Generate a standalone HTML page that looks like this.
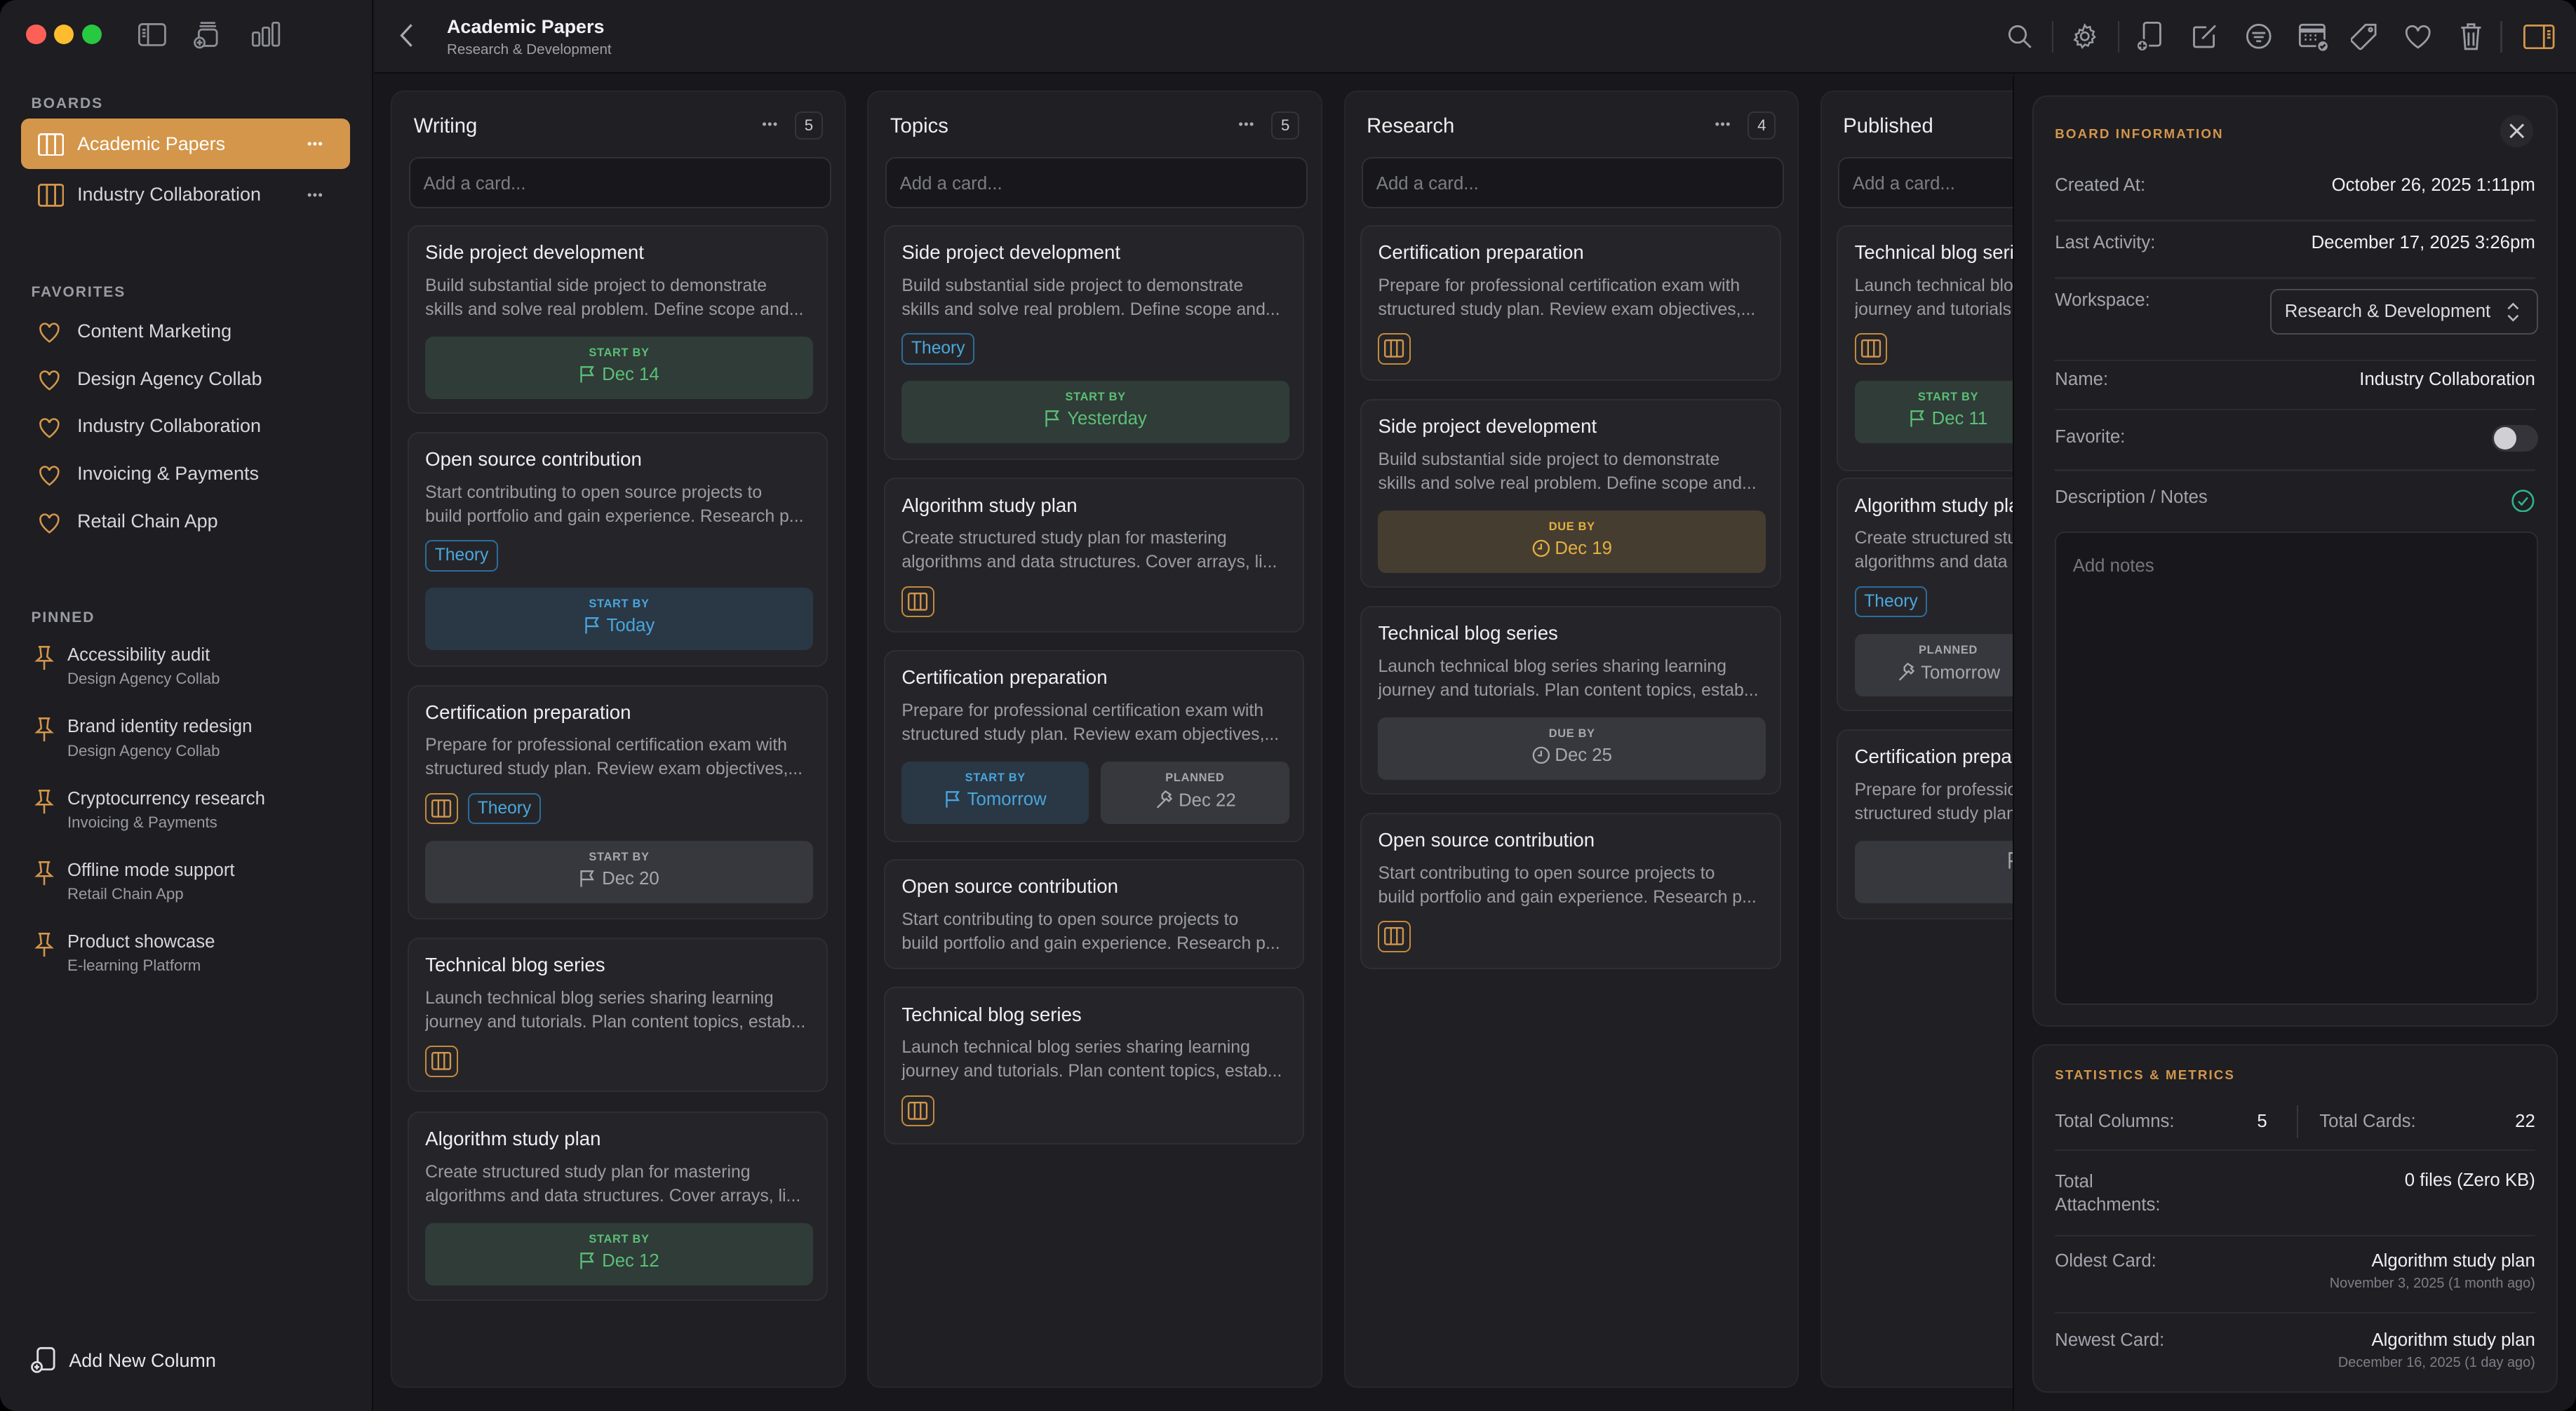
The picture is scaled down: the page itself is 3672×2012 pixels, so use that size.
<!DOCTYPE html>
<html><head><meta charset="utf-8"><style>
html{zoom:2.34184}
*{box-sizing:border-box;margin:0;padding:0}
body{width:1568px;height:859px;background:#000;font-family:"Liberation Sans",sans-serif;color:#e8e8ec;position:relative;overflow:hidden}
.win{position:absolute;left:0;top:0;width:1568px;height:859px;background:#18181c;border-radius:10px;overflow:hidden}
.a{position:absolute;white-space:nowrap}
.side{position:absolute;left:0;top:0;width:227px;height:859px;background:#1d1d22;border-right:1px solid #0e0e10}
.hdr{position:absolute;left:228px;top:0;right:0;height:45px;background:#1d1d22;border-bottom:1px solid #0c0c0e}
.sec{font-size:9px;font-weight:bold;letter-spacing:.8px;color:#9a9ba3}
.si{font-size:11.5px;color:#d6d6dc}
.col{position:absolute;top:55px;width:277px;height:790px;background:#1f1f24;border:1px solid #26262b;border-radius:8px;overflow:hidden}
.ch{position:absolute;left:13px;top:14px;font-size:12.5px;color:#eee}
.dots{position:absolute;top:15px;font-size:8px;color:#aaa;letter-spacing:0.5px}
.cnt{position:absolute;top:12px;width:17px;height:17px;border:1px solid #34343a;border-radius:4px;font-size:9.5px;text-align:center;line-height:15px;color:#ccc}
.add{position:absolute;left:10px;top:40px;width:257px;height:31px;background:#18181c;border:1px solid #303036;border-radius:6px;font-size:11px;color:#7c7d85;padding:9px 0 0 8px}
.card{position:absolute;left:10px;width:256px;background:#252529;border:1px solid #2e2e33;border-radius:7px;overflow:hidden}
.ct{position:absolute;left:10px;top:9px;font-size:11.8px;color:#f0f0f3;white-space:nowrap}
.cd{position:absolute;left:10px;top:29px;width:238px;font-size:10.6px;line-height:14.5px;color:#9b9ca4}
.cd div{white-space:nowrap;overflow:hidden;text-overflow:ellipsis}
.tag{position:absolute;top:65px;height:19px;border:1px solid #2d6c9b;border-radius:4px;font-size:10.5px;color:#4aa8e0;padding:0 5px;line-height:17px}
.ic{position:absolute;top:65px;width:20px;height:19px;border:1px solid #c48a3c;border-radius:4px}
.b{position:absolute;height:38px;border-radius:5px;text-align:center}
.b .l{font-size:7px;font-weight:bold;letter-spacing:.3px;margin-top:6px}
.b .v{font-size:11px;margin-top:3px}
.g{background:#2f3c37;color:#5cbf78}.bl{background:#2a3744;color:#48a6de}.gr{background:#37383d;color:#a7a8ae}.o{background:#463d31;color:#e3b040}
.b svg{vertical-align:-2px;margin-right:3px}
.panel{position:absolute;left:1237px;width:320px;background:#1e1e23;border:1px solid #29292e;border-radius:9px}
.pl{font-size:11px;color:#a4a5ad}
.pv{font-size:11px;color:#f0f0f3;text-align:right}
.hr{position:absolute;left:13px;right:13px;height:1px;background:#2b2b30}
.ttl{font-size:8px;font-weight:bold;letter-spacing:.9px;color:#d4964a}
</style></head><body><div class="win">

<div class="side">
 <div class="a" style="left:16px;top:15px;width:12px;height:12px;border-radius:6px;background:#fe5f57"></div>
 <div class="a" style="left:33px;top:15px;width:12px;height:12px;border-radius:6px;background:#febc2e"></div>
 <div class="a" style="left:50px;top:15px;width:12px;height:12px;border-radius:6px;background:#28c840"></div>
 <svg class="a" style="left:84px;top:14px" width="17" height="14" viewBox="0 0 17 14" fill="none" stroke="#8d8e96" stroke-width="1.2"><rect x=".6" y=".6" width="15.8" height="12.8" rx="2"/><path d="M6 .6v12.8M2.5 4h2M2.5 6h2M2.5 8h2"/></svg>
 <svg class="a" style="left:117px;top:12px" width="18" height="18" viewBox="0 0 18 18" fill="none" stroke="#8d8e96" stroke-width="1.2"><path d="M5 2h9M4.5 4h10"/><rect x="4" y="6" width="11" height="10" rx="2"/><circle cx="4.5" cy="14" r="3" fill="#1d1d22"/><path d="M4.5 12.3v3.4M2.8 14h3.4"/></svg>
 <svg class="a" style="left:153px;top:13px" width="18" height="16" viewBox="0 0 18 16" fill="none" stroke="#8d8e96" stroke-width="1.2"><rect x="1" y="7" width="4" height="8" rx="1"/><rect x="7" y="4" width="4" height="11" rx="1"/><rect x="13" y="1" width="4" height="14" rx="1"/></svg>

 <div class="a sec" style="left:19px;top:58px">BOARDS</div>
 <div class="a" style="left:13px;top:72px;width:200px;height:31px;border-radius:5px;background:#d4964a"></div>
 <svg class="a" style="left:23px;top:81px" width="16" height="14" viewBox="0 0 16 14" fill="none" stroke="#fff" stroke-width="1.2"><rect x=".6" y=".6" width="14.8" height="12.8" rx="1.5"/><path d="M5.5 .6v12.8M10.5 .6v12.8"/></svg>
 <div class="a si" style="left:47px;top:81px;color:#fff">Academic Papers</div>
 <div class="a" style="left:187px;top:83px;font-size:8px;color:#fff;letter-spacing:.5px">•••</div>
 <svg class="a" style="left:23px;top:112px" width="16" height="14" viewBox="0 0 16 14" fill="none" stroke="#d4964a" stroke-width="1.2"><rect x=".6" y=".6" width="14.8" height="12.8" rx="1.5"/><path d="M5.5 .6v12.8M10.5 .6v12.8"/></svg>
 <div class="a si" style="left:47px;top:112px">Industry Collaboration</div>
 <div class="a" style="left:187px;top:114px;font-size:8px;color:#aaa;letter-spacing:.5px">•••</div>

 <div class="a sec" style="left:19px;top:173px">FAVORITES</div>
 <div id="fav"></div>
 <div class="a sec" style="left:19px;top:371px">PINNED</div>

 <svg class="a" style="left:18px;top:820px" width="17" height="17" viewBox="0 0 17 17" fill="none" stroke="#e0e0e4" stroke-width="1.2"><rect x="5" y="1" width="10" height="13" rx="2"/><circle cx="4.5" cy="12.5" r="3" fill="#1d1d22"/><path d="M4.5 11v3M3 12.5h3"/></svg>
 <div class="a" style="left:42px;top:822px;font-size:11.5px;color:#e8e8ec">Add New Column</div>
</div>

<div class="hdr">
 <svg class="a" style="left:15px;top:14px" width="9" height="15" viewBox="0 0 9 15" fill="none" stroke="#aaa" stroke-width="1.4"><path d="M7.5 1L1.5 7.5l6 6.5"/></svg>
 <div class="a" style="left:44px;top:10px;font-size:11.5px;font-weight:bold;color:#f2f2f4">Academic Papers</div>
 <div class="a" style="left:44px;top:25px;font-size:8.8px;color:#a0a1a8">Research &amp; Development</div>
 <svg class="a" style="left:994px;top:15px" width="15" height="15" viewBox="0 0 15 15" fill="none" stroke="#9a9ba3" stroke-width="1.2"><circle cx="6" cy="6" r="5"/><path d="M9.7 9.7L14 14"/></svg>
 <div class="a" style="left:1021px;top:13px;width:1px;height:19px;background:#36363b"></div>
 <svg class="a" style="left:1033px;top:14px" width="16" height="16" viewBox="0 0 16 16" fill="none" stroke="#9a9ba3" stroke-width="1.1"><circle cx="8" cy="8" r="2.4"/><path d="M8 1.2l1.2 1.6 2-.5.4 2 1.9.8-.7 1.9 1.3 1.5-1.6 1.2.3 2-2 .2-.8 1.9-1.9-.8L6.5 14.8l-.9-1.8-2 .1.1-2L1.9 10.2l1.3-1.5-.7-1.9 1.9-.8.4-2 2 .5z"/></svg>
 <div class="a" style="left:1061px;top:13px;width:1px;height:19px;background:#36363b"></div>
 <svg class="a" style="left:1071px;top:13px" width="18" height="19" viewBox="0 0 18 19" fill="none" stroke="#9a9ba3" stroke-width="1.2"><rect x="6" y="1" width="10" height="14" rx="1.5"/><circle cx="5" cy="15" r="3.5" fill="#9a9ba3" stroke="#1d1d22"/><path d="M5 13v4M3 15h4" stroke="#1d1d22"/></svg>
 <svg class="a" style="left:1106px;top:14px" width="16" height="16" viewBox="0 0 16 16" fill="none" stroke="#9a9ba3" stroke-width="1.2"><path d="M9 2.5H2.5a1 1 0 00-1 1v10a1 1 0 001 1h10a1 1 0 001-1V7"/><path d="M6.5 9.5l8-8"/></svg>
 <svg class="a" style="left:1139px;top:14px" width="16" height="16" viewBox="0 0 16 16" fill="none" stroke="#9a9ba3" stroke-width="1.2"><circle cx="8" cy="8" r="7"/><path d="M4 6h8M5 8.5h6M6.5 11h3"/></svg>
 <svg class="a" style="left:1171px;top:14px" width="19" height="18" viewBox="0 0 19 18" fill="none" stroke="#9a9ba3" stroke-width="1.2"><rect x="1" y="1" width="15" height="13" rx="1.5"/><path d="M1 4.5h15" stroke-width="2.5"/><path d="M4 7.5h1M7 7.5h1M10 7.5h1M4 10h1M7 10h1M10 10h1" /><circle cx="15" cy="14" r="3.5" fill="#9a9ba3" stroke="#1d1d22"/><path d="M13.5 14l1 1 2-2" stroke="#1d1d22"/></svg>
 <svg class="a" style="left:1203px;top:14px" width="17" height="17" viewBox="0 0 17 17" fill="none" stroke="#9a9ba3" stroke-width="1.2"><path d="M9 1h6v6l-8.5 8.5a1 1 0 01-1.4 0l-4.6-4.6a1 1 0 010-1.4z"/><circle cx="12" cy="4" r="1"/></svg>
 <svg class="a" style="left:1236px;top:15px" width="16" height="15" viewBox="0 0 16 15" fill="none" stroke="#9a9ba3" stroke-width="1.2"><path d="M8 14S1 9.5 1 5a3.5 3.5 0 017-1 3.5 3.5 0 017 1c0 4.5-7 9-7 9z"/></svg>
 <svg class="a" style="left:1269px;top:13px" width="14" height="18" viewBox="0 0 14 18" fill="none" stroke="#9a9ba3" stroke-width="1.2"><path d="M1 4h12M5 4V2h4v2M2.5 4l1 13h7l1-13M5.5 7v8M8.5 7v8"/></svg>
 <div class="a" style="left:1294px;top:13px;width:1px;height:19px;background:#36363b"></div>
 <svg class="a" style="left:1308px;top:15px" width="19" height="15" viewBox="0 0 19 15" fill="none" stroke="#d4964a" stroke-width="1.2"><rect x=".6" y=".6" width="17.8" height="13.8" rx="1.5"/><path d="M12.5 .6v13.8M14.5 4h2M14.5 6h2M14.5 8h2"/></svg>
</div>

<div class="col" style="left:238px">
 <div class="ch">Writing</div><div class="dots" style="left:225px">•••</div><div class="cnt" style="left:245px">5</div>
 <div class="add">Add a card...</div>
</div>
<div class="col" style="left:528px">
 <div class="ch">Topics</div><div class="dots" style="left:225px">•••</div><div class="cnt" style="left:245px">5</div>
 <div class="add">Add a card...</div>
</div>
<div class="col" style="left:818px">
 <div class="ch">Research</div><div class="dots" style="left:225px">•••</div><div class="cnt" style="left:245px">4</div>
 <div class="add">Add a card...</div>
</div>
<div class="col" style="left:1108px;width:130px">
 <div class="ch">Published</div>
 <div class="add" style="width:200px">Add a card...</div>
</div>
<div id="cards"></div>
<div class="a" style="left:1225px;top:46px;width:343px;height:813px;background:#18181c;border-left:1px solid #0c0c0e"></div>

<div class="panel" style="top:58px;height:567px">
 <div class="a ttl" style="left:13px;top:18px">BOARD INFORMATION</div>
 <div class="a" style="left:284px;top:11px;width:20px;height:20px;border-radius:10px;background:#28282d"></div>
 <svg class="a" style="left:289px;top:16px" width="10" height="10" viewBox="0 0 10 10" stroke="#ccc" stroke-width="1.3"><path d="M1 1l8 8M9 1l-8 8"/></svg>
 <div class="a pl" style="left:13px;top:48px">Created At:</div><div class="a pv" style="right:13px;top:48px">October 26, 2025 1:11pm</div>
 <div class="hr" style="top:75px"></div>
 <div class="a pl" style="left:13px;top:83px">Last Activity:</div><div class="a pv" style="right:13px;top:83px">December 17, 2025 3:26pm</div>
 <div class="hr" style="top:110px"></div>
 <div class="a pl" style="left:13px;top:118px">Workspace:</div>
 <div class="a" style="left:144px;top:117px;width:163px;height:28px;border:1px solid #4a4a50;border-radius:5px;font-size:11px;color:#dcdce0;padding:7px 0 0 8px">Research &amp; Development</div>
 <svg class="a" style="left:288px;top:125px" width="8" height="12" viewBox="0 0 8 12" fill="none" stroke="#bbb" stroke-width="1.1"><path d="M1 4l3-3 3 3M1 8l3 3 3-3"/></svg>
 <div class="hr" style="top:160px"></div>
 <div class="a pl" style="left:13px;top:166px">Name:</div><div class="a pv" style="right:13px;top:166px">Industry Collaboration</div>
 <div class="hr" style="top:190px"></div>
 <div class="a pl" style="left:13px;top:201px">Favorite:</div>
 <div class="a" style="left:279px;top:200px;width:28px;height:16px;border-radius:8px;background:#34343a"></div>
 <div class="a" style="left:280px;top:201px;width:14px;height:14px;border-radius:7px;background:#d0d0d4"></div>
 <div class="hr" style="top:227px"></div>
 <div class="a pl" style="left:13px;top:238px">Description / Notes</div>
 <svg class="a" style="left:291px;top:239px" width="14" height="14" viewBox="0 0 14 14" fill="none" stroke="#2fb58a" stroke-width="1.1"><circle cx="7" cy="7" r="6.3"/><path d="M4.3 7.2l1.9 2 3.6-4.3"/></svg>
 <div class="a" style="left:13px;top:265px;width:294px;height:288px;background:#18181c;border:1px solid #2c2c31;border-radius:6px;font-size:11px;color:#74757d;padding:14px 0 0 10px">Add notes</div>
</div>

<div class="panel" style="top:636px;height:212px">
 <div class="a ttl" style="left:13px;top:13px">STATISTICS &amp; METRICS</div>
 <div class="a pl" style="left:13px;top:40px">Total Columns:</div><div class="a pv" style="left:136px;top:40px">5</div>
 <div class="a" style="left:160px;top:36px;width:1px;height:20px;background:#36363b"></div>
 <div class="a pl" style="left:174px;top:40px">Total Cards:</div><div class="a pv" style="right:13px;top:40px">22</div>
 <div class="hr" style="top:63px"></div>
 <div class="a pl" style="left:13px;top:76px;line-height:14px;white-space:normal">Total<br>Attachments:</div><div class="a pv" style="right:13px;top:76px">0 files (Zero KB)</div>
 <div class="hr" style="top:115px"></div>
 <div class="a pv" style="right:13px;top:125px">Algorithm study plan</div><div class="a pl" style="left:13px;top:125px">Oldest Card:</div>
 <div class="a" style="right:13px;top:140px;font-size:8.5px;color:#7e7f87">November 3, 2025 (1 month ago)</div>
 <div class="hr" style="top:162px"></div>
 <div class="a pl" style="left:13px;top:173px">Newest Card:</div><div class="a pv" style="right:13px;top:173px">Algorithm study plan</div>
 <div class="a" style="right:13px;top:188px;font-size:8.5px;color:#7e7f87">December 16, 2025 (1 day ago)</div>
</div>

<script>
var H='<svg width="14" height="14" viewBox="0 0 14 14" fill="none" stroke="#d4964a" stroke-width="1.1"><path d="M7 12.5S1.5 8.5 1.5 4.8a2.7 2.7 0 015.5-1 2.7 2.7 0 015.5 1C12.5 8.5 7 12.5 7 12.5z"/></svg>';
var P='<svg width="12" height="16" viewBox="0 0 12 16" fill="none" stroke="#d4964a" stroke-width="1.1"><path d="M2.5 1h7M3.5 1l.7 6L1.5 9.5h9L7.8 7l.7-6M6 9.5V15"/></svg>';
var f='',favs=['Content Marketing','Design Agency Collab','Industry Collaboration','Invoicing & Payments','Retail Chain App'];
favs.forEach(function(t,i){var y=202+29*i;f+='<div class="a" style="left:23px;top:'+(y-7)+'px">'+H+'</div><div class="a si" style="left:47px;top:'+(y-7)+'px">'+t.replace('&','&amp;')+'</div>';});
var pins=[['Accessibility audit','Design Agency Collab'],['Brand identity redesign','Design Agency Collab'],['Cryptocurrency research','Invoicing & Payments'],['Offline mode support','Retail Chain App'],['Product showcase','E-learning Platform']];
pins.forEach(function(p,i){var y=400+43.6*i;f+='<div class="a" style="left:21px;top:'+(y-7)+'px">'+P+'</div><div class="a si" style="left:41px;top:'+(y-7)+'px;font-size:11px">'+p[0]+'</div><div class="a" style="left:41px;top:'+(y+8)+'px;font-size:9.5px;color:#9a9ba3">'+p[1].replace('&','&amp;')+'</div>';});
document.getElementById('fav').outerHTML=f;

var D={side:['Build substantial side project to demonstrate','skills and solve real problem. Define scope and...'],
open:['Start contributing to open source projects to','build portfolio and gain experience. Research p...'],
cert:['Prepare for professional certification exam with','structured study plan. Review exam objectives,...'],
tech:['Launch technical blog series sharing learning','journey and tutorials. Plan content topics, estab...'],
algo:['Create structured study plan for mastering','algorithms and data structures. Cover arrays, li...']};
var T={side:'Side project development',open:'Open source contribution',cert:'Certification preparation',tech:'Technical blog series',algo:'Algorithm study plan'};
var FL='<svg width="11" height="11" viewBox="0 0 11 11" fill="none" stroke="currentColor" stroke-width="1"><path d="M1.5 10.5V1h7l-1.5 2.5L8.5 6h-7"/></svg>';
var CL='<svg width="11" height="11" viewBox="0 0 11 11" fill="none" stroke="currentColor" stroke-width="1"><circle cx="5.5" cy="5.5" r="4.7"/><path d="M5.5 2.7v3H3.5"/></svg>';
var HM='<svg width="12" height="12" viewBox="0 0 12 12" fill="none" stroke="currentColor" stroke-width="1"><path d="M2 11l5-5M5 3l2-2 3 2-1 1 1.5 1.5-1.5 1.5L7.5 5.5 6.5 6.5 5 5z"/></svg>';
var IC='<svg width="18" height="17" viewBox="0 0 18 17" fill="none" stroke="#d4964a" stroke-width="1"><rect x="3.5" y="3.5" width="11" height="10" rx="1"/><path d="M7.2 3.5v10M10.8 3.5v10"/></svg>';
function badge(cls,l,v,ic,left,w,top){return '<div class="b '+cls+'" style="left:'+left+'px;width:'+w+'px;top:'+top+'px"><div class="l">'+l+'</div><div class="v">'+ic+v+'</div></div>';}
var C=[
[248,137,'side','',[['g','START BY','Dec 14',FL]],115],
[248,263,'open','tag',[['bl','START BY','Today',FL]],143],
[248,417,'cert','ictag',[['gr','START BY','Dec 20',FL]],143],
[248,571,'tech','ic',[],94],
[248,677,'algo','',[['g','START BY','Dec 12',FL]],115],
[538,137,'side','tag',[['g','START BY','Yesterday',FL]],143],
[538,291,'algo','ic',[],94],
[538,396,'cert','',[['bl','START BY','Tomorrow',FL],['gr','PLANNED','Dec 22',HM]],117],
[538,523,'open','',[],67],
[538,601,'tech','ic',[],96],
[828,137,'cert','ic',[],95],
[828,243,'side','',[['o','DUE BY','Dec 19',CL]],115],
[828,369,'tech','',[['gr','DUE BY','Dec 25',CL]],115],
[828,495,'open','ic',[],95],
[1118,137,'tech','ic',[['g','START BY','Dec 11',FL]],150],
[1118,291,'algo','tag',[['gr','PLANNED','Tomorrow',HM]],142],
[1118,444,'cert','',[['gr','','',FL]],116]];
var s='';
C.forEach(function(c){var pub=c[0]==1118;var h='<div class="card" style="left:'+c[0]+'px;top:'+c[1]+'px;height:'+c[5]+'px"><div class="ct">'+T[c[2]]+'</div><div class="cd"><div>'+D[c[2]][0]+'</div><div>'+D[c[2]][1]+'</div></div>';
 if(c[3]=='tag')h+='<div class="tag" style="left:10px">Theory</div>';
 if(c[3]=='ic')h+='<div class="ic" style="left:10px">'+IC+'</div>';
 if(c[3]=='ictag')h+='<div class="ic" style="left:10px">'+IC+'</div><div class="tag" style="left:36px">Theory</div>';
 var top=c[3]?94:67;
 var w=pub?114:236;
 if(pub&&c[2]=='cert')w=200;
 if(c[4].length==1)h+=badge(c[4][0][0],c[4][0][1],c[4][0][2],c[4][0][3],10,w,top);
 if(c[4].length==2){h+=badge(c[4][0][0],c[4][0][1],c[4][0][2],c[4][0][3],10,114,top);h+=badge(c[4][1][0],c[4][1][1],c[4][1][2],c[4][1][3],131,115,top);}
 h+='</div>';s+=h;});
document.getElementById('cards').outerHTML=s;
</script>
</div></body></html>
